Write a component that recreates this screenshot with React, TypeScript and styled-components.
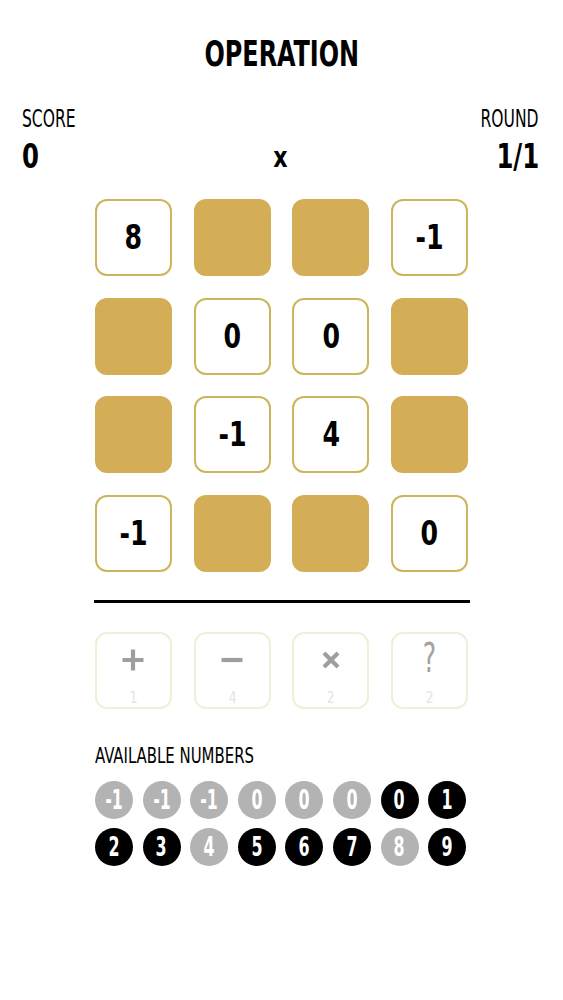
import React from 'react'
import styled, { createGlobalStyle } from 'styled-components'

const GlobalStyle = createGlobalStyle`
    body {
        margin: 0;
        background: #ffffff;
        font-family: "DejaVu Sans Condensed", "Liberation Sans", sans-serif;
        color: #000000;
    }
`

type Cell = { value?: string }

const board: Cell[][] = [
    [{ value: '8' }, {}, {}, { value: '-1' }],
    [{}, { value: '0' }, { value: '0' }, {}],
    [{}, { value: '-1' }, { value: '4' }, {}],
    [{ value: '-1' }, {}, {}, { value: '0' }],
]

const operators = [
    { symbol: 'plus', count: 1 },
    { symbol: 'minus', count: 4 },
    { symbol: 'times', count: 2 },
    { symbol: 'wild', count: 2 },
]

const numbers = [
    { n: '-1', used: true }, { n: '-1', used: true }, { n: '-1', used: true },
    { n: '0', used: true }, { n: '0', used: true }, { n: '0', used: true },
    { n: '0', used: false }, { n: '1', used: false },
    { n: '2', used: false }, { n: '3', used: false }, { n: '4', used: true },
    { n: '5', used: false }, { n: '6', used: false }, { n: '7', used: false },
    { n: '8', used: true }, { n: '9', used: false },
]

const OpIcon = ({ kind }: { kind: string }) => {
    if (kind === 'wild') return <Question>?</Question>
    return (
        <svg width="24" height="24" viewBox="0 0 24 24" fill="none" stroke="#9e9e9e" strokeWidth="4.2">
            {kind === 'plus' && <path d="M12 1.5v21M1.5 12h21" />}
            {kind === 'minus' && <path d="M1.5 12h21" />}
            {kind === 'times' && <path d="M5 5l14 14M19 5L5 19" />}
        </svg>
    )
}

export default function App() {
    return (
        <Page>
            <GlobalStyle />
            <Title>OPERATION</Title>
            <Stats>
                <Stat side="left">
                    <StatLabel side="left">SCORE</StatLabel>
                    <StatValue side="left">0</StatValue>
                </Stat>
                <CurrentOp>x</CurrentOp>
                <Stat side="right">
                    <StatLabel side="right">ROUND</StatLabel>
                    <StatValue side="right">1/1</StatValue>
                </Stat>
            </Stats>
            <Board>
                {board.flat().map((cell, i) => (
                    <Tile key={i} filled={cell.value === undefined}>
                        {cell.value && <TileText>{cell.value}</TileText>}
                    </Tile>
                ))}
            </Board>
            <Divider />
            <Operators>
                {operators.map((op) => (
                    <OpTile key={op.symbol}>
                        <OpSymbol>
                            <OpIcon kind={op.symbol} />
                        </OpSymbol>
                        <OpCount>{op.count}</OpCount>
                    </OpTile>
                ))}
            </Operators>
            <Available>
                <AvailableLabel>AVAILABLE NUMBERS</AvailableLabel>
                <Chips>
                    {numbers.map((item, i) => (
                        <Chip key={i} used={item.used}>
                            <ChipText>{item.n}</ChipText>
                        </Chip>
                    ))}
                </Chips>
            </Available>
        </Page>
    )
}

const Page = styled.div`
    width: 563px;
    min-height: 1000px;
    display: flex;
    flex-direction: column;
    align-items: center;
`

const Title = styled.h1`
    margin: 34px 0 0;
    font-size: 35px;
    font-weight: 700;
    line-height: 40px;
    transform: scaleX(0.76);
`

const Stats = styled.div`
    align-self: stretch;
    display: flex;
    justify-content: space-between;
    align-items: flex-end;
    padding: 0 24px 0 22px;
    margin-top: 32px;
`

const Stat = styled.div<{ side: string }>`
    display: flex;
    flex-direction: column;
    align-items: ${(p) => (p.side === 'right' ? 'flex-end' : 'flex-start')};
    width: 70px;
`

const StatLabel = styled.div<{ side: string }>`
    font-size: 24px;
    line-height: 26px;
    font-weight: 400;
    transform: scaleX(0.72);
    transform-origin: ${(p) => p.side} center;
`

const StatValue = styled.div<{ side: string }>`
    margin-top: 8px;
    font-size: 33px;
    line-height: 34px;
    font-weight: 700;
    transform: scaleX(0.82);
    transform-origin: ${(p) => p.side} center;
`

const CurrentOp = styled.div`
    font-size: 29px;
    line-height: 34px;
    font-weight: 700;
    transform: scaleX(0.85);
`

const Board = styled.div`
    margin-top: 25px;
    display: grid;
    grid-template-columns: repeat(4, 77px);
    gap: 21.7px;
`

const Tile = styled.div<{ filled: boolean }>`
    box-sizing: border-box;
    width: 77px;
    height: 77px;
    border-radius: 12px;
    border: 2px solid ${(p) => (p.filled ? '#d4ae57' : '#ccb65c')};
    background: ${(p) => (p.filled ? '#d4ae57' : '#ffffff')};
    display: flex;
    align-items: center;
    justify-content: center;
`

const TileText = styled.span`
    display: inline-block;
    font-size: 33px;
    font-weight: 700;
    transform: scaleX(0.85);
`

const Divider = styled.div`
    margin-top: 28px;
    width: 376px;
    height: 3px;
    background: #000000;
`

const Operators = styled.div`
    margin-top: 29px;
    display: grid;
    grid-template-columns: repeat(4, 77px);
    gap: 21.7px;
`

const OpTile = styled.div`
    box-sizing: border-box;
    width: 77px;
    height: 77px;
    border-radius: 12px;
    border: 2px solid #f1efd8;
    display: flex;
    flex-direction: column;
    align-items: center;
    padding-top: 14px;
`

const OpSymbol = styled.div`
    height: 24px;
    display: flex;
    align-items: center;
    justify-content: center;
`

const Question = styled.span`
    display: inline-block;
    font-size: 40px;
    line-height: 24px;
    font-weight: 400;
    color: #a3a3a3;
    transform: scaleX(0.7) translateY(-2px);
`

const OpCount = styled.div`
    margin-top: 16px;
    font-size: 16px;
    line-height: 20px;
    color: #e3e3e3;
    transform: scaleX(0.85);
`

const Available = styled.div`
    margin-top: 36px;
    width: 373px;
    display: flex;
    flex-direction: column;
    align-items: flex-start;
`

const AvailableLabel = styled.div`
    font-size: 21px;
    line-height: 22px;
    transform: scaleX(0.79);
    transform-origin: left center;
`

const Chips = styled.div`
    margin-top: 14px;
    display: grid;
    grid-template-columns: repeat(8, 38px);
    column-gap: 9.6px;
    row-gap: 9px;
`

const Chip = styled.div<{ used: boolean }>`
    width: 38px;
    height: 38px;
    border-radius: 50%;
    background: ${(p) => (p.used ? '#b3b3b3' : '#000000')};
    color: #ffffff;
    display: flex;
    align-items: center;
    justify-content: center;
`

const ChipText = styled.span`
    display: inline-block;
    font-size: 26px;
    font-weight: 700;
    transform: scaleX(0.68);
`
